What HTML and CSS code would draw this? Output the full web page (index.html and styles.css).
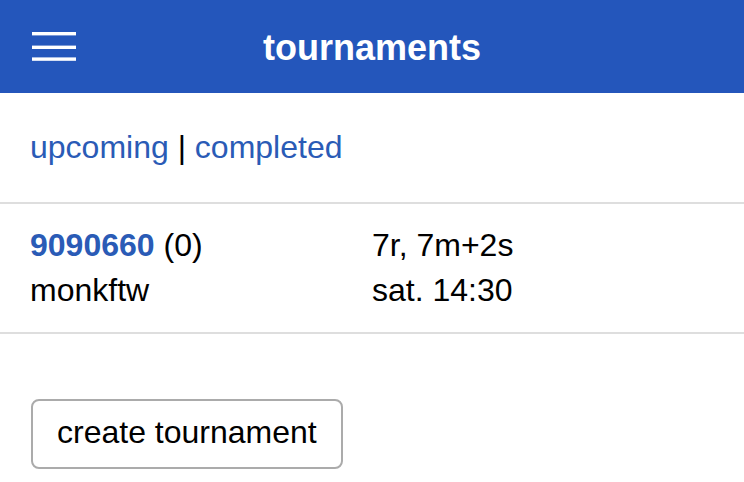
FILE: index.html
```html
<!DOCTYPE html>
<html lang="en">
<head>
<meta charset="utf-8">
<title>tournaments</title>
<link rel="stylesheet" href="styles.css">
</head>
<body>
<header class="topbar">
  <div class="topbar-left">
    <svg class="menu-icon" width="44" height="29" viewBox="0 0 44 29" aria-hidden="true">
      <rect x="0" y="0" width="44" height="3.4" fill="#fff"/>
      <rect x="0" y="13.6" width="44" height="3.4" fill="#fff"/>
      <rect x="0" y="25.4" width="44" height="3.4" fill="#fff"/>
    </svg>
  </div>
  <h1 class="topbar-title">tournaments</h1>
  <div class="topbar-right"></div>
</header>

<nav class="tabs">
  <a class="link" href="#">upcoming</a> | <a class="link" href="#">completed</a>
</nav>

<div class="list">
  <div class="row">
    <div class="col">
      <div><a class="link id" href="#">9090660</a> (0)</div>
      <div>monkftw</div>
    </div>
    <div class="col">
      <div>7r, 7m+2s</div>
      <div>sat. 14:30</div>
    </div>
  </div>
</div>

<div class="actions">
  <button class="btn" type="button">create tournament</button>
</div>
</body>
</html>
```
FILE: styles.css
```css
html, body {
  margin: 0;
  padding: 0;
  background: #fff;
}

body {
  font-family: "Liberation Sans", Arial, Helvetica, sans-serif;
  font-size: 32px;
  color: #000;
}

.topbar {
  height: 93px;
  background: #2456bb;
  display: grid;
  grid-template-columns: 1fr auto 1fr;
  align-items: center;
}

.topbar-left {
  padding-left: 32px;
  display: flex;
  align-items: center;
}

.menu-icon {
  display: block;
}

.topbar-title {
  margin: 0;
  padding-top: 3px;
  font-size: 36px;
  font-weight: bold;
  line-height: 42px;
  color: #fff;
}

.tabs {
  padding: 32px 30px 32px;
  line-height: 45px;
}

.link {
  color: #2a5bb6;
  text-decoration: none;
}

.id {
  font-weight: bold;
}

.list {
  border-top: 2px solid #dedede;
}

.row {
  display: grid;
  grid-template-columns: 1fr 1fr;
  padding: 19px 30px 19px;
  line-height: 45px;
  border-bottom: 2px solid #dedede;
}

.actions {
  padding: 65px 31px 0;
}

.btn {
  font-family: "Liberation Sans", Arial, Helvetica, sans-serif;
  font-size: 32px;
  line-height: 38px;
  color: #000;
  background: #fff;
  border: 2px solid #ababab;
  border-radius: 8px;
  padding: 12px 24px 16px;
  margin: 0;
}
```
